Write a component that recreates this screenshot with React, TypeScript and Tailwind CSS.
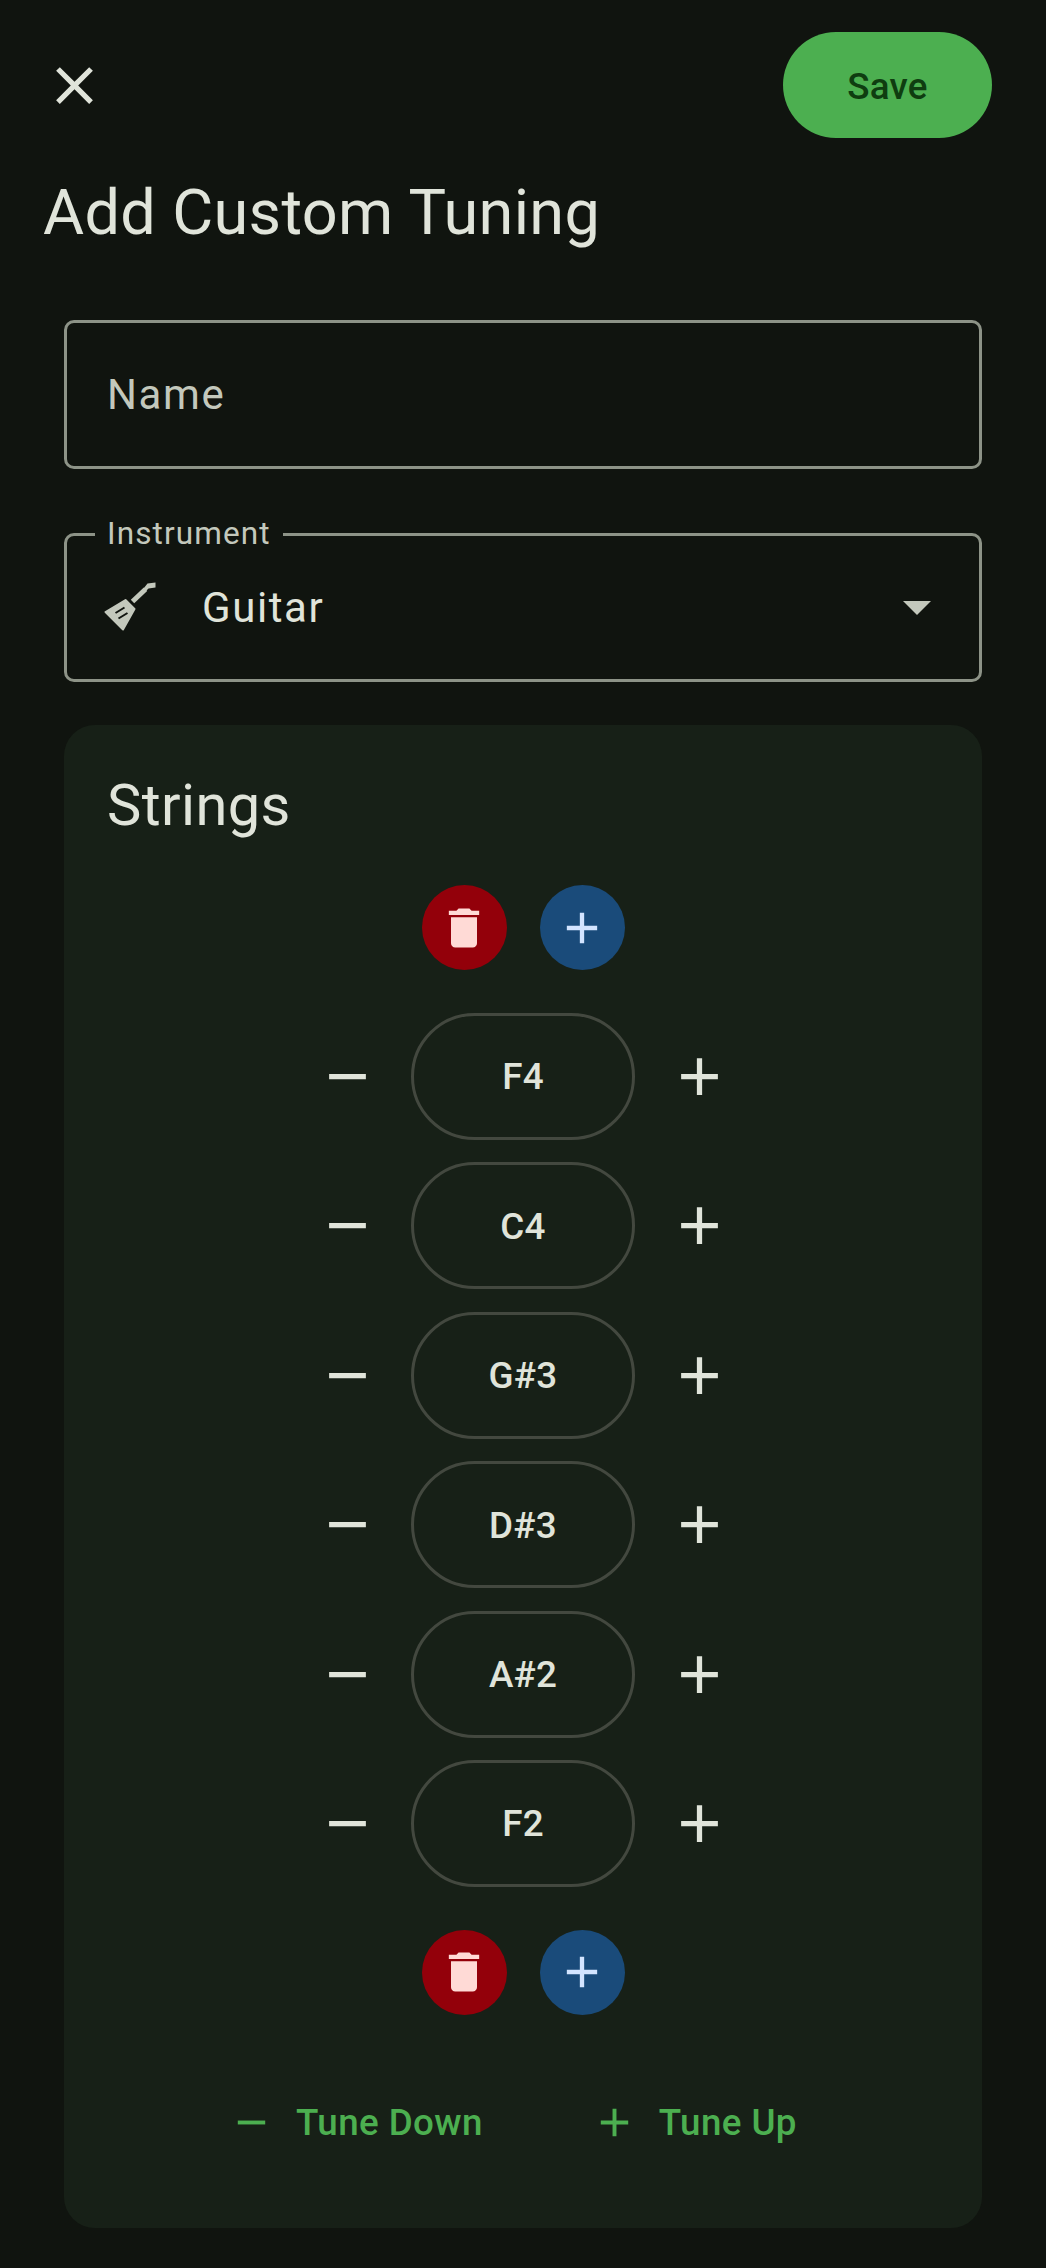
import React from 'react';

const closePath = 'M19 6.41 17.59 5 12 10.59 6.41 5 5 6.41 10.59 12 5 17.59 6.41 19 12 13.41 17.59 19 19 17.59 13.41 12z';
const addPath = 'M19 13h-6v6h-2v-6H5v-2h6V5h2v6h6v2z';
const removePath = 'M19 13H5v-2h14v2z';
const deletePath = 'M6 19c0 1.1.9 2 2 2h8c1.1 0 2-.9 2-2V7H6v12zM19 4h-3.5l-1-1h-5l-1 1H5v2h14V4z';

const notes = ['F4', 'C4', 'G#3', 'D#3', 'A#2', 'F2'];

const Icon: React.FC<{ d: string; className: string }> = ({ d, className }) => (
  <svg viewBox="0 0 24 24" fill="currentColor" className={className}>
    <path d={d} />
  </svg>
);

const GuitarIcon = () => (
  <svg viewBox="0 0 63 63" className="w-[63px] h-[63px] text-[#c3c8bc]">
    <path
      d="M7.5 36 27.5 24 36.5 33 25 53.5Z"
      fill="currentColor"
      stroke="currentColor"
      strokeWidth="2"
      strokeLinejoin="round"
    />
    <path d="M34.5 25.5 47.5 13.3" stroke="currentColor" strokeWidth="5" />
    <path d="M45.5 12.5 49.5 7.5 57.5 6.5 57.5 11.5 50.5 12.5 47.5 15.5Z" fill="currentColor" />
    <path d="M17.5 37 26.5 31.5M20.5 42.5 29.5 37" stroke="#10140f" strokeWidth="2" />
  </svg>
);

const ActionRow = () => (
  <div className="flex justify-center gap-[33px]">
    <button className="w-[85px] h-[85px] rounded-full bg-[#93000a] text-[#ffdad6] flex items-center justify-center">
      <Icon d={deletePath} className="w-[52px] h-[52px]" />
    </button>
    <button className="w-[85px] h-[85px] rounded-full bg-[#1a4b7a] text-[#d3e4ff] flex items-center justify-center">
      <Icon d={addPath} className="w-[52px] h-[52px]" />
    </button>
  </div>
);

const StringRow: React.FC<{ note: string }> = ({ note }) => (
  <div className="flex items-center justify-center gap-[1px] h-[127px]">
    <button className="w-[126px] h-[126px] flex items-center justify-center text-[#e0e4da]">
      <Icon d={removePath} className="w-[63px] h-[63px]" />
    </button>
    <div className="w-[224px] h-[127px] pt-[1px] rounded-full border-[3px] border-[#43483f] flex items-center justify-center text-[36.75px] font-medium tracking-[0.26px] text-[#e0e4da]">
      {note}
    </div>
    <button className="w-[126px] h-[126px] flex items-center justify-center text-[#e0e4da]">
      <Icon d={addPath} className="w-[63px] h-[63px]" />
    </button>
  </div>
);

export default function App() {
  return (
    <div className="w-[1046px] h-[2268px] overflow-hidden bg-[#10140f] text-[#e0e4da] font-['Roboto',sans-serif]">
      <div className="flex items-center justify-between pt-[32px] pl-[11px] pr-[54px]">
        <button className="w-[126px] h-[106px] flex items-center justify-center text-[#e0e4da]">
          <Icon d={closePath} className="w-[63px] h-[63px]" />
        </button>
        <button className="w-[209px] h-[106px] pt-[3px] rounded-full bg-[#4caf50] text-[#0f3d10] text-[36.75px] font-medium tracking-[0.26px]">
          Save
        </button>
      </div>

      <h1 className="pl-[43px] mt-[33px] text-[63px] leading-[84px] font-normal tracking-[0.35px]">Add Custom Tuning</h1>

      <div className="px-[64px] mt-[65px]">
        <div className="h-[149px] rounded-[10px] border-[3px] border-[#8d9387] flex items-center pl-[40px] text-[42px] tracking-[1.6px] text-[#c3c8bc]">
          Name
        </div>

        <div className="relative mt-[64px] h-[149px] rounded-[10px] border-[3px] border-[#8d9387] flex items-center pl-[31px] pr-[48px]">
          <span className="absolute left-[28px] -top-[23px] px-[12px] bg-[#10140f] text-[31.5px] leading-[42px] tracking-[1.1px] text-[#c3c8bc]">
            Instrument
          </span>
          <GuitarIcon />
          <span className="ml-[41px] flex-1 text-[42px] tracking-[1.6px]">Guitar</span>
          <svg viewBox="0 0 28 14" className="w-[28px] h-[14px] text-[#c3c8bc]">
            <path d="M0 0h28L14 14z" fill="currentColor" />
          </svg>
        </div>

        <div className="mt-[43px] h-[1503px] rounded-[31px] bg-[#172017] pt-[42px] flex flex-col">
          <h2 className="pl-[43px] text-[57.75px] leading-[76px] font-normal tracking-[0.4px]">Strings</h2>
          <div className="mt-[42px]">
            <ActionRow />
          </div>
          <div className="mt-[43px] flex flex-col gap-[22.4px]">
            {notes.map((note) => (
              <StringRow key={note} note={note} />
            ))}
          </div>
          <div className="mt-[43px]">
            <ActionRow />
          </div>
          <div className="mt-[80px] flex justify-center gap-[108px] pr-[21px] text-[#4caf50] text-[36.75px] font-medium tracking-[0.4px]">
            <button className="flex items-center gap-[21px]">
              <Icon d={removePath} className="w-[47px] h-[47px]" />
              Tune Down
            </button>
            <button className="flex items-center gap-[21px]">
              <Icon d={addPath} className="w-[47px] h-[47px]" />
              Tune Up
            </button>
          </div>
        </div>
      </div>
    </div>
  );
}
